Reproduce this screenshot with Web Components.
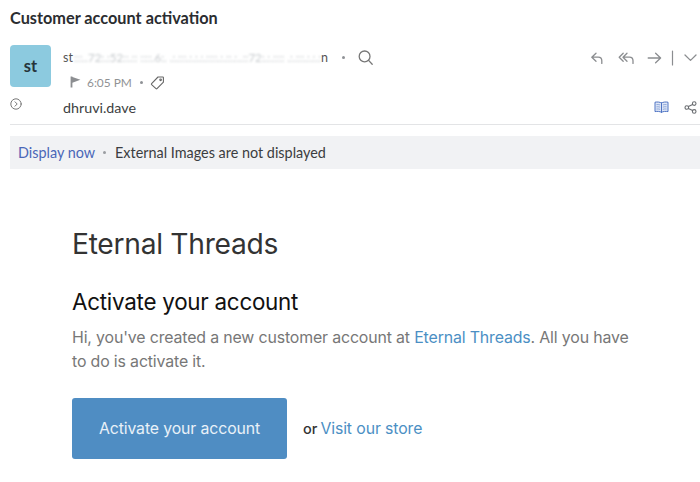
<!DOCTYPE html>
<html>
<head>
<meta charset="utf-8">
<title>Customer account activation</title>
<style>
  html, body { margin: 0; background: #fff; }
  body { width: 700px; height: 482px; overflow: hidden; }
</style>
</head>
<body>
<mail-view>
  <mail-header subject="Customer account activation" initials="st" time="6:05 PM" recipient="dhruvi.dave"></mail-header>
  <image-notice action="Display now" message="External Images are not displayed"></image-notice>
  <activation-card shop="Eternal Threads"></activation-card>
</mail-view>

<script>
const templateView = document.createElement('template');
templateView.innerHTML = `
  <style>
    :host { display: flex; flex-direction: column; width: 700px; }
  </style>
  <slot></slot>
`;

class MailView extends HTMLElement {
  constructor() {
    super();
    this.attachShadow({ mode: 'open' });
    this.shadowRoot.appendChild(templateView.content.cloneNode(true));
  }
}

const templateHeader = document.createElement('template');
templateHeader.innerHTML = `
  <style>
    :host { display: block; padding: 9px 0 0 10px; font-family: Lato, "Liberation Sans", sans-serif; color: #333; }
    svg { display: block; fill: none; stroke: currentColor; stroke-linecap: round; stroke-linejoin: round; }
    h1 { margin: 0; font-size: 16.3px; line-height: 18px; font-weight: 700; color: #2b2d30; }
    .top { display: flex; margin-top: 18px; height: 42px; }
    .avatar {
      flex: none; width: 41px; height: 42px; border-radius: 4px; background: #8ccadf;
      display: flex; align-items: center; justify-content: center;
      font-size: 16.5px; font-weight: 700; color: #26343a; padding-bottom: 1px; box-sizing: border-box;
    }
    .who { flex: 1; padding-left: 12px; min-width: 0; }
    .line1 { display: flex; align-items: center; height: 23px; margin-top: 1px; font-size: 12.5px; color: #666; }
    .first { color: #555; }
    .smudge { color: #c6cacd; filter: blur(.8px); font-size: 11.5px; margin-left: 1px; white-space: nowrap; }
    .dot { width: 3px; height: 3px; border-radius: 50%; background: #8f9296; flex: none; }
    .line1 .dot { margin: 0 12px 0 14px; }
    .search { color: #777; }
    .actions { margin-left: auto; margin-right: 3px; display: flex; align-items: center; color: #8b8d90; height: 23px; }
    .line2 { display: flex; align-items: center; height: 18px; margin-top: 4px; color: #909295; font-size: 11.9px; padding-left: 7px; }
    .line2 .time { margin-left: 6px; }
    .line2 .dot { margin: 0 7px 0 8px; }
    .bottom { display: flex; align-items: center; height: 18px; margin-top: 11px; }
    .expand { flex: none; width: 53px; color: #777; margin-top: -6px; }
    .to { font-size: 14.3px; color: #3d3f42; }
    .tools { margin-left: auto; display: flex; align-items: center; gap: 15px; margin-right: 3px; color: #6b6e72; }
    hr { border: 0; border-top: 1px solid #e3e4e6; margin: 8px 0 0; }
  </style>
  <h1></h1>
  <div class="top">
    <div class="avatar"></div>
    <div class="who">
      <div class="line1">
        <span class="first">st</span><span class="smudge">:::..72:.:52::.:: ::::.6:. .:.:::.:.:.:.::::.:.::.:..::72:.:.:::: .:.:::.:.:.:</span><span class="first">n</span>
        <span class="dot"></span>
        <svg class="search" width="17" height="17" viewBox="0 0 17 17" stroke-width="1.3"><circle cx="7.6" cy="7.4" r="5.4"/><path d="M11.6 11.4l3.6 3.8"/></svg>
        <div class="actions">
          <svg width="14" height="14" viewBox="0 0 14 14" stroke-width="1.3"><path d="M6 2.2L1.8 6.2 6 10.2M2 6.2h6.2c2.4 0 3.6 1.5 3.6 3.6v2.6"/></svg>
          <svg style="margin-left:14px" width="17" height="14" viewBox="0 0 17 14" stroke-width="1.3"><path d="M5.2 2.2L1.2 6.2l4 4M9 2.2L5 6.2l4 4M5.4 6.2h6c2.4 0 3.6 1.5 3.6 3.6v2.6"/></svg>
          <svg style="margin-left:12px" width="15" height="14" viewBox="0 0 15 14" stroke-width="1.3"><path d="M1.2 7h12.4M8.6 2.2L13.6 7l-5 4.8"/></svg>
          <svg style="margin-left:9px" width="3" height="16" viewBox="0 0 3 16" stroke-width="1.2"><path d="M1.5 1v14"/></svg>
          <svg style="margin-left:10px" width="13" height="8" viewBox="0 0 13 8" stroke-width="1.3"><path d="M1 1l5.5 5.4L12 1"/></svg>
        </div>
      </div>
      <div class="line2">
        <svg width="11" height="12" viewBox="0 0 11 12" style="stroke:none;fill:#8c8e91"><path d="M.6 .4h1.8v.6L10.4 3.8 2.4 6.8v4.8H.6z"/></svg>
        <span class="time"></span>
        <span class="dot"></span>
        <svg width="15" height="15" viewBox="0 0 15 15" stroke-width="1.1" style="color:#666"><path d="M1.6 8.6L8 2h4.8c.4 0 .6.3.6.6v4.6L7 13.6c-.3.3-.7.3-1 0L1.6 9.6c-.3-.3-.3-.7 0-1z"/><circle cx="10.6" cy="4.8" r=".8"/></svg>
      </div>
    </div>
  </div>
  <div class="bottom">
    <div class="expand">
      <svg width="12" height="12" viewBox="0 0 12 12" stroke-width="1"><circle cx="6" cy="6" r="5.2"/><path d="M5 3.8L7.2 6 5 8.2"/></svg>
    </div>
    <span class="to"></span>
    <div class="tools">
      <svg width="15" height="12" viewBox="0 0 15 12" stroke-width="1" style="color:#4f74c4"><path d="M7.5 2C6 .9 3.2.8 1 1.2v9.4c2.2-.4 5-.3 6.5.8 1.5-1.1 4.3-1.2 6.5-.8V1.2C11.8.8 9 .9 7.5 2z" fill="#dfe7f6"/><path d="M7.5 2v9.4"/><path d="M2.8 3.6c1-.1 2-.1 3 .2M2.8 5.8c1-.1 2-.1 3 .2M2.8 8c1-.1 2-.1 3 .2M9.2 3.8c1-.3 2-.3 3-.2M9.2 6c1-.3 2-.3 3-.2M9.2 8.2c1-.3 2-.3 3-.2" stroke-width=".8" opacity=".7"/></svg>
      <svg width="13" height="13" viewBox="0 0 13 13" stroke-width="1.1"><circle cx="2.8" cy="6.5" r="1.8"/><circle cx="10.2" cy="2.6" r="1.8"/><circle cx="10.2" cy="10.4" r="1.8"/><path d="M4.4 5.6l4.2-2.2M4.4 7.4l4.2 2.2"/></svg>
    </div>
  </div>
  <hr>
`;

class MailHeader extends HTMLElement {
  constructor() {
    super();
    this.attachShadow({ mode: 'open' });
    this.shadowRoot.appendChild(templateHeader.content.cloneNode(true));
    this.shadowRoot.querySelector('h1').innerText = this.getAttribute('subject');
    this.shadowRoot.querySelector('.avatar').innerText = this.getAttribute('initials');
    this.shadowRoot.querySelector('.time').innerText = this.getAttribute('time');
    this.shadowRoot.querySelector('.to').innerText = this.getAttribute('recipient');
  }
}

const templateNotice = document.createElement('template');
templateNotice.innerHTML = `
  <style>
    :host {
      display: flex; align-items: center; height: 33px; margin: 11px 0 0 10px; padding-left: 8px;
      background: #f1f2f4; font-family: Lato, "Liberation Sans", sans-serif; font-size: 14.4px; color: #3b3d40;
    }
    a { color: #4a67b8; text-decoration: none; }
    .dot { width: 3px; height: 3px; border-radius: 50%; background: #9a9da1; margin: 0 9px 0 8px; }
  </style>
  <a href="#"></a><span class="dot"></span><span class="msg"></span>
`;

class ImageNotice extends HTMLElement {
  constructor() {
    super();
    this.attachShadow({ mode: 'open' });
    this.shadowRoot.appendChild(templateNotice.content.cloneNode(true));
    this.shadowRoot.querySelector('a').innerText = this.getAttribute('action');
    this.shadowRoot.querySelector('.msg').innerText = this.getAttribute('message');
  }
}

const templateCard = document.createElement('template');
templateCard.innerHTML = `
  <style>
    :host { display: block; padding: 57px 0 0 72px; font-family: Inter, "Liberation Sans", sans-serif; }
    h2 { margin: 0; font-size: 28.2px; line-height: 36px; font-weight: 400; color: #333; letter-spacing: -.28px; }
    h3 { margin: 26px 0 0; font-size: 22.4px; line-height: 28px; font-weight: 400; color: #111; letter-spacing: -.25px; }
    p { margin: 10px 0 0; font-size: 15.9px; line-height: 24px; color: #777; letter-spacing: -.15px; white-space: nowrap; }
    a { color: #4b8fc4; text-decoration: none; }
    .cta { display: flex; align-items: center; margin-top: 24px; }
    .button {
      display: flex; align-items: center; justify-content: center; width: 215px; height: 61px; border-radius: 3px;
      background: #4f8dc3; color: #e9f1f8; font-size: 15.8px; letter-spacing: -.1px;
    }
    .or { margin-left: 16px; font-size: 14.5px; font-weight: 500; color: #333; }
    .store { margin-left: 3px; font-size: 15.8px; letter-spacing: -.1px; }
  </style>
  <h2 class="shop"></h2>
  <h3>Activate your account</h3>
  <p>Hi, you've created a new customer account at <a class="shop" href="#"></a>. All you have<br>to do is activate it.</p>
  <div class="cta">
    <a class="button" href="#">Activate your account</a>
    <span class="or">or</span>
    <a class="store" href="#">Visit our store</a>
  </div>
`;

class ActivationCard extends HTMLElement {
  constructor() {
    super();
    this.attachShadow({ mode: 'open' });
    this.shadowRoot.appendChild(templateCard.content.cloneNode(true));
    this.shadowRoot.querySelectorAll('.shop').forEach(el => { el.innerText = this.getAttribute('shop'); });
  }
}

window.customElements.define('mail-view', MailView);
window.customElements.define('mail-header', MailHeader);
window.customElements.define('image-notice', ImageNotice);
window.customElements.define('activation-card', ActivationCard);
</script>
</body>
</html>
